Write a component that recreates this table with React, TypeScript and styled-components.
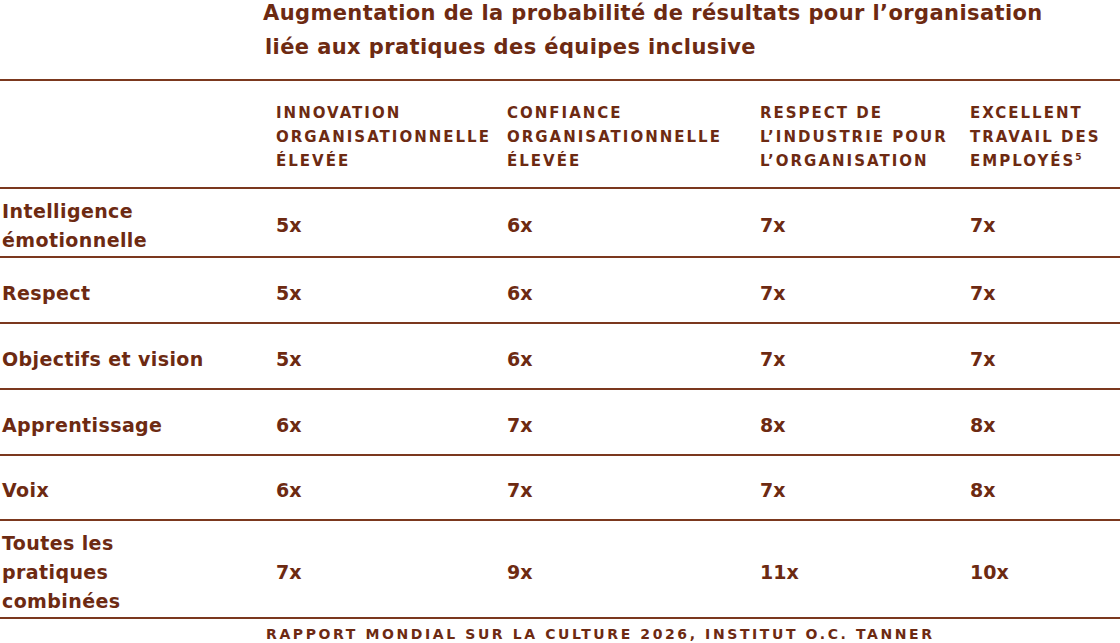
import React from 'react'
import styled, { createGlobalStyle } from 'styled-components'

const GlobalStyle = createGlobalStyle`
    html, body {
        margin: 0;
        padding: 0;
        background: #ffffff;
    }
    body {
        font-family: "DejaVu Sans", "Liberation Sans", sans-serif;
        color: #6d2a12;
    }
`

const brown = '#6d2a12'
const rule = '#7b381e'
const columns = '276px 231px 253px 210px 1fr'

const Page = styled.div`
    width: 1120px;
    height: 643px;
    overflow: hidden;
`

const Title = styled.h1`
    margin: 0;
    padding: 0 0 0 263px;
    height: 79px;
    font-size: 21px;
    font-weight: 700;
    line-height: 34px;
    letter-spacing: 0.4px;
    color: ${brown};

    span {
        display: block;
        position: relative;
        top: -4px;
    }
    span + span {
        padding-left: 2px;
    }
`

const Table = styled.div`
    border-top: 2px solid ${rule};
`

const HeadRow = styled.div`
    display: grid;
    grid-template-columns: ${columns};
    align-items: center;
    height: 106px;
    border-bottom: 2px solid ${rule};
`

const HeadCell = styled.div`
    padding-top: 6px;
    font-size: 15px;
    font-weight: 700;
    line-height: 24px;
    letter-spacing: 2px;
    text-transform: uppercase;
    white-space: nowrap;
    color: ${brown};

    sup {
        font-size: 9px;
        letter-spacing: 0;
        vertical-align: 6px;
        line-height: 0;
    }
`

const Row = styled.div<{ $h: number }>`
    display: grid;
    grid-template-columns: ${columns};
    align-items: center;
    height: ${(p) => p.$h}px;
    border-bottom: 2px solid ${rule};
`

const Label = styled.div`
    padding: 6px 0 0 2px;
    font-size: 19px;
    font-weight: 700;
    line-height: 29px;
    letter-spacing: 0.4px;
    color: ${brown};
`

const Value = styled.div`
    padding-top: 6px;
    font-size: 19px;
    font-weight: 700;
    line-height: 29px;
    color: ${brown};
`

const Source = styled.div`
    padding: 5px 0 0 266px;
    font-size: 14px;
    font-weight: 700;
    letter-spacing: 2.6px;
    line-height: 20px;
    text-transform: uppercase;
    color: ${brown};
    white-space: nowrap;
`

const rows = [
    { label: ['Intelligence', 'émotionnelle'], values: ['5x', '6x', '7x', '7x'], h: 67 },
    { label: ['Respect'], values: ['5x', '6x', '7x', '7x'], h: 64 },
    { label: ['Objectifs et vision'], values: ['5x', '6x', '7x', '7x'], h: 64 },
    { label: ['Apprentissage'], values: ['6x', '7x', '8x', '8x'], h: 64 },
    { label: ['Voix'], values: ['6x', '7x', '7x', '8x'], h: 63 },
    { label: ['Toutes les', 'pratiques', 'combinées'], values: ['7x', '9x', '11x', '10x'], h: 96 },
]

const App = () => {
    return (
        <Page>
            <GlobalStyle />
            <Title>
                <span>Augmentation de la probabilité de résultats pour l’organisation</span>
                <span>liée aux pratiques des équipes inclusive</span>
            </Title>
            <Table>
                <HeadRow>
                    <div />
                    <HeadCell>Innovation<br />organisationnelle<br />élevée</HeadCell>
                    <HeadCell>Confiance<br />organisationnelle<br />élevée</HeadCell>
                    <HeadCell>Respect de<br />l’industrie pour<br />l’organisation</HeadCell>
                    <HeadCell>Excellent<br />travail des<br />employés<sup>5</sup></HeadCell>
                </HeadRow>
                {rows.map((r, i) => (
                    <Row key={i} $h={r.h}>
                        <Label>
                            {r.label.map((l, j) => (
                                <React.Fragment key={j}>
                                    {j > 0 && <br />}
                                    {l}
                                </React.Fragment>
                            ))}
                        </Label>
                        {r.values.map((v, j) => (
                            <Value key={j}>{v}</Value>
                        ))}
                    </Row>
                ))}
            </Table>
            <Source>Rapport mondial sur la culture 2026, Institut O.C. Tanner</Source>
        </Page>
    )
}

export default App
